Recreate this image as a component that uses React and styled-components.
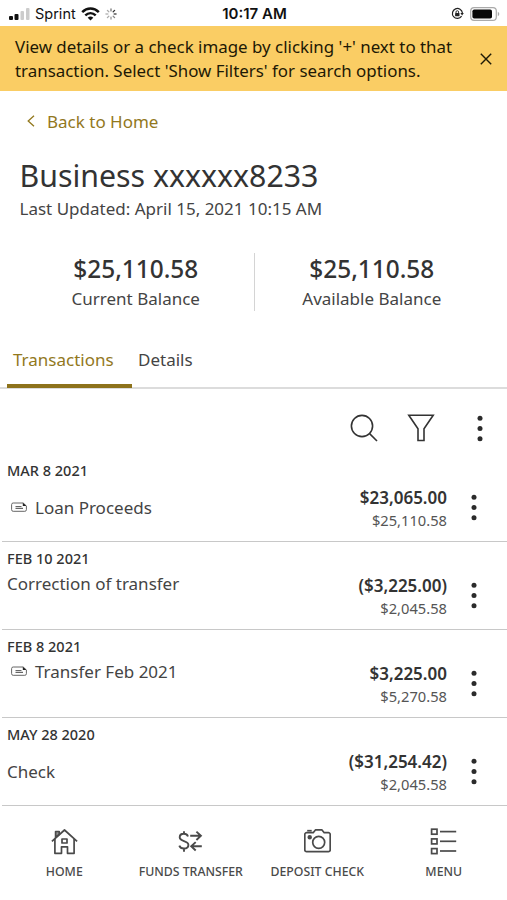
import React from "react";
import styled, { createGlobalStyle } from "styled-components";

const GlobalStyle = createGlobalStyle`
  * {
    box-sizing: border-box;
  }

  body {
    margin: 0;
    background: #fff;
    color: #333;
    font-family: "Noto Sans", sans-serif;
  }

  button {
    padding: 0;
    border: 0;
    background: none;
    color: inherit;
    font: inherit;
  }
`;

const Screen = styled.div`
  display: flex;
  flex-direction: column;
  width: 507px;
  height: 900px;
  overflow: hidden;
  background: #fff;
  white-space: nowrap;

  svg {
    display: block;
    flex: none;
  }
`;

const StatusBar = styled.header`
  display: grid;
  grid-template-columns: 1fr auto 1fr;
  align-items: center;
  height: 26px;
  padding: 1px 7px 0 9px;
  color: #111;
  font-family: Inter, sans-serif;
  font-size: 14.5px;
`;

const StatusGroup = styled.div`
  display: flex;
  align-items: center;
  justify-content: ${(props) => (props.$end ? "flex-end" : "flex-start")};
  gap: ${(props) => (props.$end ? "6px" : "5px")};
`;

const Carrier = styled.span`
  margin-left: -1px;
`;

const Clock = styled.span`
  font-size: 15px;
  font-weight: 600;
`;

const Banner = styled.div`
  display: flex;
  align-items: center;
  justify-content: space-between;
  height: 65px;
  padding: 0 14px 0 15px;
  background: #facd64;
  color: #1d1905;
`;

const BannerText = styled.p`
  margin: 0;
  font-size: 16.9px;
  line-height: 24px;
`;

const BackLink = styled.button`
  display: flex;
  align-items: center;
  gap: 12px;
  align-self: flex-start;
  height: 24px;
  margin: 18px 0 0 27px;
  color: #92781d;
  font-size: 17px;
`;

const Account = styled.section`
  padding: 23px 19.5px 0;
`;

const AccountName = styled.h1`
  margin: 0;
  font-size: 30.3px;
  font-weight: 400;
  line-height: 40px;
`;

const Updated = styled.p`
  margin: 0;
  color: #444;
  font-size: 17px;
  line-height: 26px;
`;

const Balances = styled.section`
  display: grid;
  grid-template-columns: 1fr 1fr;
  height: 58px;
  margin: 31px 18px 0;
`;

const Balance = styled.div`
  height: 58px;
  text-align: center;

  & + & {
    border-left: 1px solid #d4d4d4;
  }
`;

const BalanceValue = styled.div`
  font-size: 24.4px;
  font-weight: 500;
  line-height: 32px;
`;

const BalanceLabel = styled.div`
  color: #444;
  font-size: 17px;
  line-height: 28px;
`;

const Tabs = styled.nav`
  display: flex;
  height: 78px;
  padding: 24px 7px 0;
  border-bottom: 2px solid #dcdcdc;
`;

const Tab = styled.button`
  display: flex;
  align-items: flex-start;
  width: ${(props) => (props.$active ? "125px" : "auto")};
  height: 53px;
  padding: 13px 6px 0;
  border-bottom: 4px solid ${(props) => (props.$active ? "#8d721b" : "transparent")};
  color: ${(props) => (props.$active ? "#92781d" : "#444")};
  font-size: 17px;
  line-height: 24px;
`;

const Toolbar = styled.div`
  display: flex;
  align-items: center;
  justify-content: flex-end;
  height: 65px;
  padding: 13px 24px 0 0;
`;

const ToolButton = styled.button`
  display: flex;
  margin-left: ${(props) => props.$gap || 0}px;
`;

const Rows = styled.ul`
  margin: 0;
  padding: 0;
  list-style: none;
`;

const Row = styled.li`
  display: grid;
  grid-template-columns: 1fr auto 60px;
  height: 88px;
  margin-left: 2px;
  padding-left: 5px;
  border-bottom: 1px solid #c8c8c8;
`;

const RowDate = styled.div`
  padding-top: 6px;
  font-size: 14.5px;
  font-weight: 500;
  line-height: 20px;
`;

const RowDescription = styled.div`
  display: flex;
  align-items: center;
  gap: 8px;
  margin-top: ${(props) => (props.$spaced ? "16px" : "4px")};
  padding-left: ${(props) => (props.$indent ? "4px" : "0")};
  color: #444;
  font-size: 17px;
  line-height: 24px;
`;

const RowAmounts = styled.div`
  padding-top: 32px;
  text-align: right;
`;

const Amount = styled.div`
  font-size: 17px;
  font-weight: 600;
  line-height: 24px;
`;

const RunningBalance = styled.div`
  color: #555;
  font-size: 14.7px;
  line-height: 21px;
`;

const RowMenu = styled.button`
  display: flex;
  justify-content: center;
  padding: 40px 6px 0 0;
`;

const BottomNav = styled.nav`
  display: grid;
  grid-template-columns: repeat(4, 1fr);
  height: 94px;
  padding: 22px 0 0 1px;
`;

const NavItem = styled.button`
  display: flex;
  flex-direction: column;
  align-items: center;
  gap: 8px;
  color: #4a4a4a;
  font-size: 12.3px;
  font-weight: 500;
  line-height: 18px;
`;

const SignalIcon = () => (
  <svg width="22" height="14" viewBox="0 0 22 14">
    <rect x="0" y="9" width="4" height="4" rx="1" fill="#111" />
    <rect x="5.5" y="7" width="4" height="6" rx="1" fill="#111" />
    <rect x="11.5" y="4" width="3.5" height="9" rx="1" fill="#ccc" />
    <rect x="17" y="1" width="3.5" height="12" rx="1" fill="#ccc" />
  </svg>
);

const WifiIcon = () => (
  <svg width="19" height="14" viewBox="0 0 19 14" fill="none" stroke="#111" strokeWidth="2.5">
    <path d="M1.2 5.2C6 .4 13 .4 17.8 5.2" />
    <path d="M4.3 8.4c3.2-3 7.2-3 10.4 0" />
    <path d="M6.7 10.7c1.7-1.6 3.9-1.6 5.6 0L9.5 13.4z" fill="#111" stroke="none" />
  </svg>
);

const SPOKES = ["#777", "#333", "#555", "#888", "#999", "#aaa", "#bbb", "#aaa"];

const SpinnerIcon = () => (
  <svg width="12" height="12" viewBox="0 0 12 12" strokeWidth="1.3" strokeLinecap="round">
    {SPOKES.map((color, index) => (
      <path key={index} d="M6 .9v2" stroke={color} transform={`rotate(${index * 45} 6 6)`} />
    ))}
  </svg>
);

const RotationLockIcon = () => (
  <svg width="13" height="13" viewBox="0 0 13 13" fill="none" stroke="#222">
    <path d="M10.6 9.2A5 5 0 1 1 11.4 6" strokeWidth="1.2" />
    <path d="M9.4 6h3.4l-1.7 2.4z" fill="#222" stroke="none" />
    <rect x="4.1" y="6" width="4.4" height="3.2" rx=".5" fill="#222" stroke="none" />
    <path d="M5 6V5a1.3 1.3 0 0 1 2.6 0v1" strokeWidth=".9" />
  </svg>
);

const BatteryIcon = () => (
  <svg width="30" height="14" viewBox="0 0 30 14">
    <rect x=".7" y=".7" width="25.6" height="12.6" rx="3.4" fill="#fff" stroke="#aaa" strokeWidth="1.2" />
    <rect x="2.4" y="2.4" width="19.6" height="9.2" rx="1.8" fill="#080808" />
    <path d="M27.8 4.8c2 .8 2 3.6 0 4.4z" fill="#aaa" />
  </svg>
);

const CloseIcon = () => (
  <svg width="14" height="14" viewBox="0 0 14 14" stroke="#1d1905" strokeWidth="1.4">
    <path d="m1.8 1.8 10.4 10.4M12.2 1.8 1.8 12.2" />
  </svg>
);

const BackIcon = () => (
  <svg width="8" height="12" viewBox="0 0 8 12" fill="none" stroke="currentColor" strokeWidth="1.3">
    <path d="M7 .7 1.2 6 7 11.3" />
  </svg>
);

const SearchIcon = () => (
  <svg width="28" height="28" viewBox="0 0 28 28" fill="none" stroke="#333" strokeWidth="1.6">
    <circle cx="12" cy="12" r="10.6" />
    <path d="m19.6 19.6 7.4 7.4" />
  </svg>
);

const FilterIcon = () => (
  <svg width="28" height="28" viewBox="0 0 28 28" fill="none" stroke="#333" strokeWidth="1.6">
    <path d="M1.8 1.3h24.4L17 14.8v11.7h-6V14.8z" />
  </svg>
);

const DotsIcon = () => (
  <svg width="6" height="27" viewBox="0 0 6 27" fill="#2b2b2b">
    <circle cx="3" cy="3.3" r="2.5" />
    <circle cx="3" cy="13.5" r="2.5" />
    <circle cx="3" cy="23.7" r="2.5" />
  </svg>
);

const CheckImageIcon = () => (
  <svg width="16" height="12" viewBox="0 0 16 12" fill="none" stroke="#666">
    <path d="M2.2 1h10l3.2 3v3.7a1.6 1.6 0 0 1-1.6 1.6H2.2A1.6 1.6 0 0 1 .6 7.700V2.600A1.600 1.600 0 0 1 2.200 1z" />
    <path d="M11.800.800v3.300h3.700z" fill="#222" stroke="none" />
    <path d="M4.500 4.500h6M4.500 6.300h7.500" strokeWidth="1.200" />
  </svg>
);

const HomeIcon = () => (
  <svg width="27" height="27" viewBox="0 0 27 27" fill="none" stroke="currentColor" strokeWidth="1.7" strokeLinejoin="round">
    <path d="M.9 13.3 13.5 2l12.6 11.3" />
    <path d="M3.9 11V25.3h6.6v-6.500h6v6.500h6.600V11" />
    <path d="M4.600 9.400V3.500h3.600v2.800z" fill="currentColor" fillOpacity=".6" />
    <rect x="11" y="11" width="5" height="4" />
  </svg>
);

const TransferIcon = () => (
  <svg width="25" height="27" viewBox="0 0 25 27" fill="none" stroke="currentColor" strokeWidth="1.9">
    <path d="M10 8.500C9.300 6.700 7.800 5.800 5.900 5.800 3.400 5.800 1.700 7.200 1.700 9.300c0 4.900 8.700 2.700 8.700 7.700 0 2.100-1.900 3.500-4.500 3.500-2.300 0-3.900-1-4.600-2.900M6 3.200V6M6 20.500v3.200" />
    <path d="M12.200 7.800h10.700M18.400 3.600l4.500 4.200-4.500 4.200" />
    <path d="M23.800 18.300H13.200M17.700 14.100l-4.500 4.200 4.500 4.200" />
  </svg>
);

const CameraIcon = () => (
  <svg width="27" height="27" viewBox="0 0 27 27" fill="none" stroke="currentColor" strokeWidth="1.7" strokeLinejoin="round">
    <path d="M2.6 4.700h6.600l2.400-2.900h6.200l2.400 2.900h4.200a1.800 1.800 0 0 1 1.800 1.800v15.400a1.800 1.800 0 0 1-1.800 1.800H2.600A1.800 1.800 0 0 1 .8 21.900V6.500a1.800 1.800 0 0 1 1.800-1.800z" />
    <path d="M3.200 2.700h4.500" />
    <circle cx="14.700" cy="14.300" r="6" />
    <circle cx="5.700" cy="9.300" r="1.400" fill="currentColor" />
  </svg>
);

const MenuIcon = () => (
  <svg width="27" height="27" viewBox="0 0 27 27" fill="none" stroke="currentColor" strokeWidth="1.7">
    {[1.200, 10.900, 20.600].map((y) => (
      <g key={y}>
        <rect x="1.600" y={y} width="5.400" height="5" />
        <path d={`M10 ${y + 2.4}h16.200`} />
      </g>
    ))}
  </svg>
);

const transactions = [
  { date: "MAR 8 2021", description: "Loan Proceeds", amount: "$23,065.00", balance: "$25,110.58", image: true, spaced: true },
  { date: "FEB 10 2021", description: "Correction of transfer", amount: "($3,225.00)", balance: "$2,045.58" },
  { date: "FEB 8 2021", description: "Transfer Feb 2021", amount: "$3,225.00", balance: "$5,270.58", image: true },
  { date: "MAY 28 2020", description: "Check", amount: "($31,254.42)", balance: "$2,045.58", spaced: true },
];

const navigation = [
  { label: "HOME", Icon: HomeIcon },
  { label: "FUNDS TRANSFER", Icon: TransferIcon },
  { label: "DEPOSIT CHECK", Icon: CameraIcon },
  { label: "MENU", Icon: MenuIcon },
];

const Transaction = ({ date, description, amount, balance, image, spaced }) => (
  <Row>
    <div>
      <RowDate>{date}</RowDate>
      <RowDescription $indent={image} $spaced={spaced}>
        {image ? <CheckImageIcon /> : null}
        {description}
      </RowDescription>
    </div>
    <RowAmounts>
      <Amount>{amount}</Amount>
      <RunningBalance>{balance}</RunningBalance>
    </RowAmounts>
    <RowMenu>
      <DotsIcon />
    </RowMenu>
  </Row>
);

const App = () => {
  return (
    <Screen>
      <GlobalStyle />
      <StatusBar>
        <StatusGroup>
          <SignalIcon />
          <Carrier>Sprint</Carrier>
          <WifiIcon />
          <SpinnerIcon />
        </StatusGroup>
        <Clock>10:17 AM</Clock>
        <StatusGroup $end>
          <RotationLockIcon />
          <BatteryIcon />
        </StatusGroup>
      </StatusBar>
      <Banner>
        <BannerText>
          View details or a check image by clicking '+' next to that
          <br />
          transaction. Select 'Show Filters' for search options.
        </BannerText>
        <CloseIcon />
      </Banner>
      <BackLink>
        <BackIcon />
        Back to Home
      </BackLink>
      <Account>
        <AccountName>Business xxxxxx8233</AccountName>
        <Updated>Last Updated: April 15, 2021 10:15 AM</Updated>
      </Account>
      <Balances>
        <Balance>
          <BalanceValue>$25,110.58</BalanceValue>
          <BalanceLabel>Current Balance</BalanceLabel>
        </Balance>
        <Balance>
          <BalanceValue>$25,110.58</BalanceValue>
          <BalanceLabel>Available Balance</BalanceLabel>
        </Balance>
      </Balances>
      <Tabs>
        <Tab $active>Transactions</Tab>
        <Tab>Details</Tab>
      </Tabs>
      <Toolbar>
        <ToolButton>
          <SearchIcon />
        </ToolButton>
        <ToolButton $gap={29}>
          <FilterIcon />
        </ToolButton>
        <ToolButton $gap={42}>
          <DotsIcon />
        </ToolButton>
      </Toolbar>
      <Rows>
        {transactions.map((transaction) => (
          <Transaction key={transaction.date} {...transaction} />
        ))}
      </Rows>
      <BottomNav>
        {navigation.map(({ label, Icon }) => (
          <NavItem key={label}>
            <Icon />
            {label}
          </NavItem>
        ))}
      </BottomNav>
    </Screen>
  );
};

export default App;
